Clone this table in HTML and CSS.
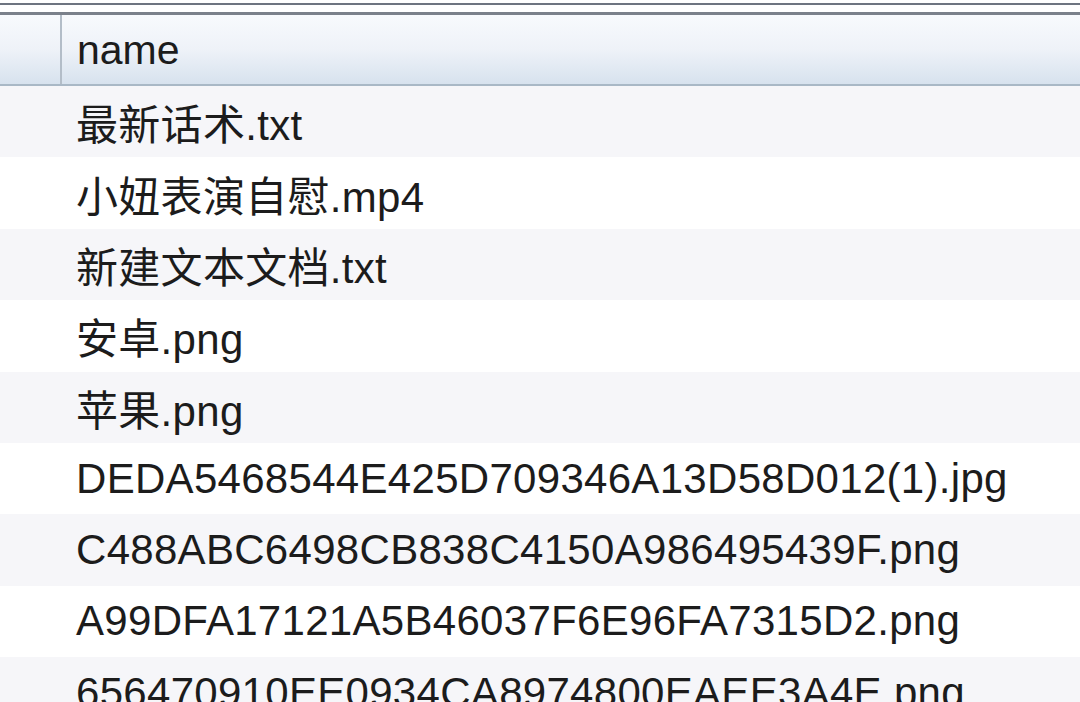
FILE: index.html
```html
<!DOCTYPE html>
<html lang="zh-CN">
<head>
    <meta charset="UTF-8">
    <meta name="viewport" content="width=device-width, initial-scale=1.0">
    <title>name</title>
    <link rel="stylesheet" href="styles.css">
</head>
<body>

    <div class="frame">
        <div class="table">
            <div class="head">
                <div class="corner"></div>
                <div class="col-title">name</div>
            </div>
            <div class="row odd"><div class="num"></div><div class="cell">最新话术.txt</div></div>
            <div class="row"><div class="num"></div><div class="cell">小妞表演自慰.mp4</div></div>
            <div class="row odd"><div class="num"></div><div class="cell">新建文本文档.txt</div></div>
            <div class="row"><div class="num"></div><div class="cell">安卓.png</div></div>
            <div class="row odd"><div class="num"></div><div class="cell">苹果.png</div></div>
            <div class="row"><div class="num"></div><div class="cell">DEDA5468544E425D709346A13D58D012(1).jpg</div></div>
            <div class="row odd"><div class="num"></div><div class="cell">C488ABC6498CB838C4150A986495439F.png</div></div>
            <div class="row"><div class="num"></div><div class="cell">A99DFA17121A5B46037F6E96FA7315D2.png</div></div>
            <div class="row odd"><div class="num"></div><div class="cell">656470910EE0934CA8974800EAEE3A4E.png</div></div>
        </div>
    </div>

</body>
</html>
```

FILE: styles.css
```css
body {
    margin: 0;
    height: 702px;
    overflow: hidden;
    background: #ffffff;
    font-family: "Liberation Sans", "Noto Sans CJK SC", sans-serif;
    color: #1c1c1c;
}
.frame {
    padding-top: 3px;
    background: #ffffff;
}
.table {
    border-top: 2px solid #6d7480;
    background: #ffffff;
}
.head {
    display: grid;
    grid-template-columns: 62px 1fr;
    height: 69px;
    margin-top: 7px;
    border-top: 3px solid #7b818b;
    border-bottom: 2px solid #a9b8c6;
    background: linear-gradient(to bottom, #f8fafd 0%, #eef2f8 50%, #d7e2ee 100%);
}
.corner {
    border-right: 2px solid #b3bdc8;
}
.col-title {
    display: flex;
    align-items: center;
    padding-left: 15px;
    padding-top: 2px;
    font-size: 41px;
}
.row {
    display: grid;
    grid-template-columns: 62px 1fr;
    height: 71.4px;
    background: #ffffff;
}
.row.odd {
    background: #f6f6f9;
}
.cell {
    display: flex;
    align-items: center;
    padding-left: 14px;
    font-size: 42px;
    letter-spacing: 0.3px;
    white-space: nowrap;
}
```
